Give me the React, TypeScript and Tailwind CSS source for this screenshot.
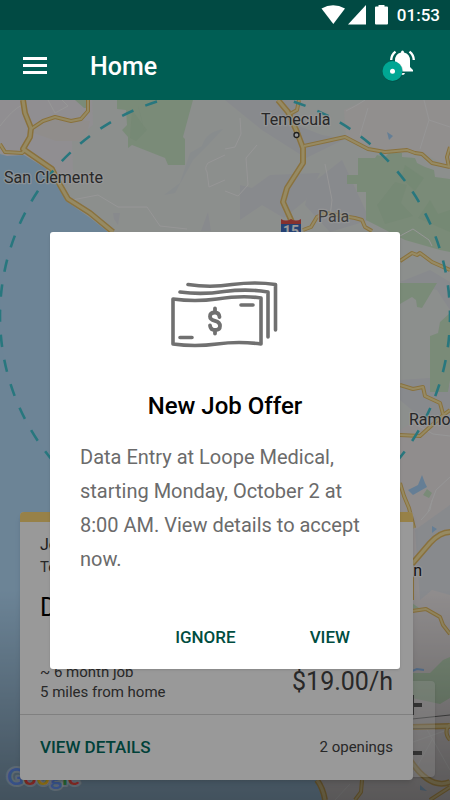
const majorRoads = [
  "M23 100 L25 113 L31 128 L30 137 L23 149 L52 169 L60 185 L68 199 L90 213 L113 232",
  "M278 100 L288 112 L297 132 L303 148 L303 163 L287 188 L283 202 L292 222",
  "M412 564 L430 543 Q440 532 450 532",
  "M317 780 Q323 788 325 800",
  "M410 760 Q430 790 450 782",
  "M412 727 L450 726",
];

const minorRoads = [
  "M31 129 L43 121 L55 117 L71 121 L81 119 L88 111 L88 100",
  "M0 144 L5 152 L22 153 L26 149",
  "M299 100 L297 110 L290 114",
  "M304 146 L345 137 L368 149 L385 152 L407 150 L415 153 L422 154 L432 163 L450 167",
  "M450 147 L447 157 L449 167",
  "M303 230 L311 227 L317 217 L325 213 L355 218 L362 220 L365 227 L372 231",
  "M400 261 L412 253 L417 255 L420 253 L432 262 L450 270",
  "M400 385 L413 389 L423 387 L425 396 L440 403 L443 414",
  "M400 435 L420 436 L442 416 L450 410",
  "M400 483 L404 496 L409 508 L414 528",
  "M412 576 L412 600",
  "M412 611 L426 609 L440 617 L443 625 L450 634",
  "M362 780 L361 792 L355 800",
  "M430 800 L450 787",
  "M450 724 Q443 732 450 740",
];

const parks = [
  "M117 100 H193 L183 137 L185 139 V165 H168 L165 158 L132 145 L128 148 V137 L122 130 L127 125 L126 110 L117 109 Z",
  "M75 100 H88 V108 L84 108 Z",
  "M358 158 L375 158 L377 155 L385 157 L390 152 L402 153 V157 L415 158 L417 163 L425 167 L434 170 L435 177 L450 179 V252 L440 250 L405 240 L366 220 V192 H357 V184 H347 V175 H358 Z",
  "M400 283 H437 L422 308 L417 307 L416 300 L412 297 L400 304 Z",
  "M450 313 L440 322 L438 333 L430 336 V392 L448 392 L450 380 Z",
  "M423 495 L427 489 L432 493 L429 498 Z",
  "M412 603 L419 608 L412 609 Z",
  "M412 673 L430 673 L443 660 L450 657 V698 L440 704 L412 698 Z",
];

const lanes = [
  "M0 126 Q12 110 22 105",
  "M48 100 L55 113 L68 106 L62 100",
  "M225 155 L208 163 Q204 168 207 172 L209 187 L225 180",
  "M72 200 L98 195 L118 207 L147 207 L160 226 L187 229",
  "M225 149 L235 147 L241 134 L240 118",
  "M225 191 L238 196 L248 185 L246 158 L257 145",
  "M325 164 L332 200 L330 217",
  "M346 111 L357 105 L365 100 M360 135 L368 108",
  "M424 100 L429 120 L420 149 M429 120 L450 127",
  "M400 236 L413 229 L429 240 L432 246",
  "M412 422 L433 434 L450 436 M450 477 L436 490 L428 512",
  "M421 520 L430 510 L432 500",
  "M413 742 L450 729 M425 726 L450 770 M413 774 L433 738",
  "M335 800 L350 784",
];

const hills = [
  "M225 100 H300 L296 125 L322 135 L345 139 L306 158 L262 130 Z",
  "M270 175 L320 173 L306 200 L284 218 L262 205 L240 220 V185 L252 188 Z",
  "M310 185 L342 160 L370 220 L330 232 L305 205 Z",
  "M400 282 L430 270 L450 282 V310 L437 290 Z",
  "M400 380 L430 378 L450 385 V408 L430 425 L400 400 Z",
  "M415 530 L450 505 V595 L432 590 L420 600 Z",
  "M208 212 L211 231 H201 Z M113 213 L120 213 L118 225 L114 219 Z",
];

const RegionMap = () => (
  <svg
    viewBox="0 100 450 700"
    preserveAspectRatio="xMidYMid slice"
    className="absolute inset-0 h-full w-full"
    fontFamily="Roboto, sans-serif"
    role="img"
    aria-label="Map"
  >
    <defs>
      <linearGradient id="shade" x1="0" y1="0" x2="0" y2="1">
        <stop offset="0" stopColor="#000" stopOpacity="0" />
        <stop offset="1" stopColor="#000" stopOpacity="0.38" />
      </linearGradient>
    </defs>
    <rect y="100" width="450" height="700" fill="#eaeeec" />
    <path
      d="M0 100 H92 L93 125 L72 141 L73 175 L60 185 L0 153 Z"
      fill="#f1edf2"
    />
    <path d="M28 131 L55 118 L90 121 L85 141 L56 141 Z" fill="#f1ece8" />
    <path
      d="M366 100 H450 V168 L424 153 L382 150 L346 137 L344 110 Z"
      fill="#f2eeed"
    />
    <path d="M400 430 L450 400 V800 H300 V600 Z" fill="#f0ebec" />
    <g fill="#e3e6ec">
      {hills.map((d) => (
        <path key={d} d={d} />
      ))}
    </g>
    <g fill="#cbe8c8">
      {parks.map((d) => (
        <path key={d} d={d} />
      ))}
    </g>
    <g fill="#bddfbc" opacity="0.5">
      <path d="M132 110 L147 130 L136 141 L130 138 Z M138 106 L142 122 L145 133 L141 116 Z" />
      <path d="M377 205 L395 182 L407 185 L401 203 L413 216 L385 224 Z M405 165 L424 178 L415 191 L401 178 Z M418 218 L430 200 L438 214 L450 210 V232 Z" />
    </g>
    <path
      d="M0 154 L7 156 L24 155 L42 166 L52 173 L58 185 L66 201 L89 217 L112 235 L180 330 L250 560 L300 740 L318 780 L325 800 H0 Z"
      fill="#b4dcfb"
    />
    <g fill="#a8d3f8">
      <path d="M387 132 L393 136 L389 140 Z" />
      <path d="M408 490 L418 485 L422 475 L425 483 L427 487 L413 495 Z" />
      <path d="M432 526 L437 529 L432 533 Z M420 785 L427 791 L420 790 Z" />
    </g>
    <path
      d="M223 129 Q206 132 202 146 L190 153 L180 183 L164 195 L175 193 L193 160 L205 148 Z"
      fill="#e3eaeb"
    />
    <path d="M412 671 L417 669 L424 670" fill="none" stroke="#9bcaff" strokeWidth="2" />
    <g fill="none" stroke="#fbfbfb" strokeWidth="1">
      {lanes.map((d) => (
        <path key={d} d={d} />
      ))}
    </g>
    <path d="M412 719 L450 715" fill="none" stroke="#777" strokeWidth="1" />
    <g fill="none" strokeLinejoin="round">
      <g stroke="#e5bd65">
        {minorRoads.map((d) => (
          <path key={d} d={d} strokeWidth="4" />
        ))}
        {majorRoads.map((d) => (
          <path key={d} d={d} strokeWidth="6" />
        ))}
      </g>
      <g stroke="#fbe6a3">
        {minorRoads.map((d) => (
          <path key={d} d={d} strokeWidth="2" />
        ))}
        {majorRoads.map((d) => (
          <path key={d} d={d} strokeWidth="3" />
        ))}
      </g>
    </g>
    <circle
      cx="225"
      cy="316"
      r="225"
      fill="#fff"
      fillOpacity="0.03"
      stroke="#44c6d2"
      strokeWidth="2.6"
      strokeDasharray="12.4 12.845"
      strokeDashoffset="6.2"
    />
    <path d="M281 219 Q286 222 291 219 Q296 222 301 219 V224 H281 Z" fill="#e0524e" />
    <path d="M281 224 H301 V240 H281 Z" fill="#3f6fc4" />
    <text x="291" y="236" fontSize="14" fontWeight="700" fill="#fff" textAnchor="middle">
      15
    </text>
    <circle cx="296.500" cy="135" r="2.500" fill="#fff" stroke="#333" strokeWidth="1.300" />
    <g
      fill="#444"
      stroke="#fff"
      strokeOpacity="0.7"
      strokeWidth="2.500"
      strokeLinejoin="round"
      paintOrder="stroke"
    >
      <text x="261" y="125" fontSize="16">Temecula</text>
      <text x="4" y="183" fontSize="16">San Clemente</text>
      <text x="318" y="222" fontSize="16" fill="#666">Pala</text>
      <text x="409" y="425" fontSize="16">Ramona</text>
      <text x="422" y="576" fontSize="16" fill="#222" textAnchor="end">El Cajon</text>
    </g>
    <rect y="590" width="450" height="210" fill="url(#shade)" />
    <text
      x="7"
      y="785"
      fontFamily="Lato, sans-serif"
      fontSize="23"
      fontWeight="700"
      stroke="#fff"
      strokeOpacity="0.25"
      strokeWidth="4"
      strokeLinejoin="round"
      paintOrder="stroke"
    >
      <tspan fill="#5b86e0">G</tspan>
      <tspan fill="#d8453b">o</tspan>
      <tspan fill="#e6b422">o</tspan>
      <tspan fill="#5b86e0">g</tspan>
      <tspan fill="#3a9a52">l</tspan>
      <tspan fill="#d8453b">e</tspan>
    </text>
  </svg>
);

const StatusBar = () => (
  <div className="flex h-[30px] items-center justify-end bg-[#014a43] pr-[10px] text-white">
    <svg width="70" height="30" viewBox="0 0 70 30" fill="currentColor" aria-hidden="true">
      <path d="M0.500 8.500 Q12 2 24 8.500 L12.300 24 Z" />
      <path d="M45 5 V24.500 H27 Z" />
      <path d="M54 7.500 Q54 6.500 55 6.500 H57.500 V5 H63.500 V6.500 H66 Q67 6.500 67 7.500 V23.500 Q67 24.500 66 24.500 H55 Q54 24.500 54 23.500 Z" />
    </svg>
    <span className="ml-[6px] text-[17px] leading-[30px] font-medium">01:53</span>
  </div>
);

const AppBar = () => (
  <header className="flex h-[70px] items-center bg-[#005e54] pr-[34px] pl-[23px] text-white">
    <button type="button" aria-label="Menu">
      <svg width="24" height="17" viewBox="0 0 24 17" fill="currentColor">
        <path d="M0 0 H24 V3 H0 Z M0 7 H24 V10 H0 Z M0 14 H24 V17 H0 Z" />
      </svg>
    </button>
    <h1 className="ml-[43px] pt-1 text-[25px] leading-8 font-medium">Home</h1>
    <button type="button" aria-label="Notifications" className="ml-auto pt-[2px]">
      <svg width="36" height="34" viewBox="0 0 36 34">
        <path
          d="M21 3.500 Q21 1.500 22.500 1.500 Q24 1.500 24 3.500 Q30 5 30 11.500 V18 L33 21 V22.500 H12 V21 L15 18 V11.500 Q15 5 21 3.500 Z M20 24 H25 Q24.500 26 22.500 26 Q20.500 26 20 24 Z"
          fill="#fff"
        />
        <path
          d="M11.200 11 Q11.500 5.500 15.500 2.600 M33.800 11 Q33.500 5.500 29.500 2.600"
          fill="none"
          stroke="#fff"
          strokeWidth="2.400"
        />
        <circle cx="13" cy="22.500" r="10.300" fill="#000" opacity="0.15" />
        <circle cx="12.500" cy="22" r="10" fill="#00a693" />
        <circle cx="12.500" cy="22.300" r="2.500" fill="#fff" />
      </svg>
    </button>
  </header>
);

const ZoomControls = () => (
  <div className="absolute right-[15px] bottom-[23px] flex w-11 flex-col rounded-sm bg-white/30 text-[#555] shadow">
    <button
      type="button"
      aria-label="Zoom in"
      className="flex h-12 items-center justify-center border-b border-gray-500/30"
    >
      <svg width="18" height="20" viewBox="0 0 18 20" fill="currentColor">
        <path d="M0 8 H8 V0 H10 V8 H18 V12 H10 V20 H8 V12 H0 Z" />
      </svg>
    </button>
    <button
      type="button"
      aria-label="Zoom out"
      className="flex h-12 items-center justify-center"
    >
      <svg width="18" height="4" viewBox="0 0 18 4" fill="currentColor">
        <path d="M0 0 H18 V4 H0 Z" />
      </svg>
    </button>
  </div>
);

const JobCard = () => (
  <article className="relative mr-[37px] mb-5 ml-5 overflow-hidden rounded-sm bg-white text-[#444] shadow-md">
    <div className="h-[10px] bg-[#fcd878]" />
    <div className="px-5 pt-3 pb-3">
      <p className="text-base leading-[22px] text-[#333]">Job Offer</p>
      <p className="text-[15px] leading-[22px]">Temporary</p>
      <h2 className="mt-3 text-[25px] leading-9 text-black">Data Entry</h2>
      <div className="mt-9 flex items-end justify-between">
        <p className="text-[15px] leading-5">
          ~ 6 month job
          <br />5 miles from home
        </p>
        <p className="pb-1 text-[25px] leading-8">$19.00/h</p>
      </div>
    </div>
    <div className="flex h-[66px] items-center justify-between border-t border-[#d6d6d6] px-5">
      <a href="#details" className="text-[17px] font-medium text-[#006d5f]">
        VIEW DETAILS
      </a>
      <span className="text-[15px]">2 openings</span>
    </div>
  </article>
);

const MoneyIcon = () => (
  <svg
    width="110"
    height="68"
    viewBox="0 0 110 68"
    fill="none"
    stroke="#707070"
    strokeWidth="3.600"
    strokeLinecap="round"
    strokeLinejoin="round"
    className="mx-auto overflow-visible"
    aria-hidden="true"
  >
    <path d="M3 17 Q25 20 47 17 Q73 13 91 16 V62 Q69 59 47 62 Q25 65 3 62 Z" />
    <path d="M10 10 Q32 13 54 9.500 Q78 6.500 98 10 V55" />
    <path d="M18 2.500 Q40 6 62 2.500 Q86 -0.500 105.500 2.500 V48" />
    <path d="M71 23 H83 M10 55.500 H22" />
    <path
      d="M49.500 35 Q49 30.500 45 30.500 Q40 30.500 40 34.500 Q40 37.500 45 38.800 Q50 40 50 44 Q50 48 45 48 Q40.500 48 40 43.500 M45 26.500 V30 M45 48 V51.500"
      strokeWidth="3.800"
    />
  </svg>
);

const OfferDialog = () => (
  <div className="absolute inset-0 flex items-center justify-center bg-black/40 px-[50px]">
    <section
      role="dialog"
      aria-labelledby="offer-title"
      className="w-full max-w-md rounded-[3px] bg-white px-[30px] pt-[50px] pb-[14px] shadow-sm"
    >
      <MoneyIcon />
      <h2
        id="offer-title"
        className="mt-10 text-center text-[24px] leading-8 font-medium text-black"
      >
        New Job Offer
      </h2>
      <p className="mt-[18px] text-[20px] leading-[34px] text-[#6b6b6b]">
        Data Entry at Loope Medical, starting Monday, October 2 at 8:00 AM. View
        details to accept now.
      </p>
      <div className="mt-[43px] flex justify-end gap-[74px] pr-5 text-[17px] leading-9 font-medium text-[#004d40]">
        <button type="button">IGNORE</button>
        <button type="button">VIEW</button>
      </div>
    </section>
  </div>
);

const App = () => {
  return (
    <div className="flex min-h-screen flex-col font-[Roboto,sans-serif]">
      <StatusBar />
      <AppBar />
      <main className="relative flex flex-1 flex-col justify-end overflow-hidden">
        <RegionMap />
        <ZoomControls />
        <JobCard />
        <OfferDialog />
      </main>
    </div>
  );
};

export default App;
